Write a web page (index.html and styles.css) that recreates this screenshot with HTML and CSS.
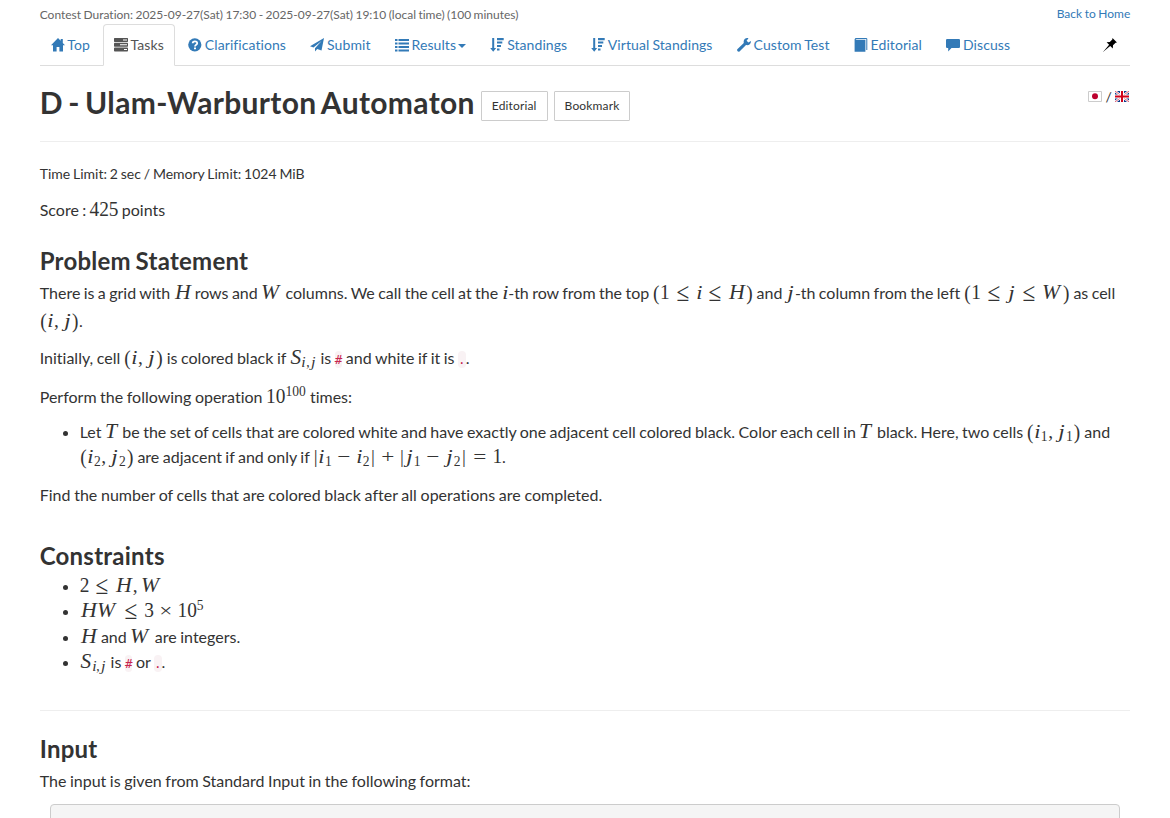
FILE: index.html
```html
<!DOCTYPE html>
<html lang="en">
<head>
<meta charset="utf-8">
<title>D - Ulam-Warburton Automaton</title>
<link rel="stylesheet" href="styles.css">
</head>
<body>
<main class="container">
  <div class="contest-bar"><span>Contest Duration: 2025-09-27(Sat) 17:30 - 2025-09-27(Sat) 19:10 (local time) (100 minutes)</span><a class="home" href="#">Back to Home</a></div>
  <nav class="tabs">
    <a class="tab" href="#"><svg class="icon" viewBox="0 0 14 14"><path d="M7 0L0 7.300h2V13.500h3.600V9h2.800v4.500H12V7.300h2L11.800 5V1H9.700v1.800z"/></svg> Top</a>
    <a class="tab active" href="#"><svg class="icon" viewBox="0 0 14 14"><path d="M.5 0h13l.5.6v2.800l-.5.6H.5L0 3.400V.6zM.5 4.800h13l.5.6v2.800l-.5.6H.5L0 8.200V5.400zM.5 9.600h13l.5.6v2.600l-.5.6H.5L0 12.800v-2.600z"/><path class="cut" d="M9 1.500h4v1H9zM6 6.300h7v1H6zM10 11h3v1h-3z"/></svg> Tasks</a>
    <a class="tab" href="#"><svg class="icon" viewBox="0 0 14 14"><circle cx="6.800" cy="6.800" r="6.600"/><path class="cut-line" d="M4.700 5.300C4.700 2.800 9.200 2.700 9.200 5.200 9.200 6.800 7 6.500 7 8.400"/><path class="cut" d="M6 9.400h2v1.900H6z"/></svg> Clarifications</a>
    <a class="tab" href="#"><svg class="icon" viewBox="0 0 14 14"><path d="M14 0L0 8.300l3.500 1.100L11.500 3 5 10.200V13.500L7.200 11l4.300 1.600z"/></svg> Submit</a>
    <a class="tab" href="#"><svg class="icon" viewBox="0 0 14 14"><path d="M0 1h2.500v2H0zM3.500 1H14v2H3.500zM0 4.500h2.500v2H0zM3.500 4.500H14v2H3.500zM0 8h2.500v2H0zM3.500 8H14v2H3.500zM0 11.500h2.500v2H0zM3.500 11.500H14v2H3.500z"/></svg> Results<i class="caret"></i></a>
    <a class="tab" href="#"><svg class="icon" viewBox="0 0 14 14"><path d="M2.200 0h2v10H6.200L3.200 13.800.2 10h2zM7 0h6.700v2.300H7zM7 3.600h5.300v2H7zM7 7h4v2H7zM7 10.500h2.500v2H7z"/></svg> Standings</a>
    <a class="tab" href="#"><svg class="icon" viewBox="0 0 14 14"><path d="M2.200 0h2v10H6.200L3.200 13.800.2 10h2zM7 0h6.700v2.300H7zM7 3.600h5.300v2H7zM7 7h4v2H7zM7 10.500h2.500v2H7z"/></svg> Virtual Standings</a>
    <a class="tab" href="#"><svg class="icon" viewBox="0 0 14 14"><path d="M11.500.2C8.500-.6 6 1.700 6.800 4.900L.3 11.300q-.6 1 .3 1.900.9.800 1.900.2L9 7c2.800.7 5.200-1.300 4.900-4L11.400 4.600 9.600 2.800z"/></svg> Custom Test</a>
    <a class="tab" href="#"><svg class="icon" viewBox="0 0 14 14"><path d="M1.500 0h11l.8.8V12h-1V1H2.500l-1 .8h9.900v12H.6V1.200z"/></svg> Editorial</a>
    <a class="tab" href="#"><svg class="icon" viewBox="0 0 14 14"><path d="M.8.9h12.400l.8.8v7.500l-.8.8H5.500L2.200 13.500V10H.8L0 9.200V1.700z"/></svg> Discuss</a>
    <a class="pin" href="#"><svg class="icon" viewBox="0 0 14 14"><path d="M9.500 0L14 4.400 12.600 4.700 10 7.300 9.800 10.500 7.200 7.900 0 14 6.100 6.800 3.600 4.300 6.800 4 9.300 1.500z"/></svg></a>
  </nav>

  <header class="title-row">
    <h1>D - Ulam-Warburton Automaton</h1>
    <a class="btn" href="#">Editorial</a>
    <a class="btn" href="#">Bookmark</a>
    <span class="lang"><svg class="flag" viewBox="0 0 14 11"><path fill="#fff" stroke="#ccc" d="M.5.5h13v10H.5z"/><circle cx="7" cy="5.300" r="3" fill="#bc002d"/></svg><span>/</span><svg class="flag" viewBox="0 0 14 11"><path fill="#0a3a8c" d="M0 0h14v11H0z"/><path stroke="#fff" stroke-width="2.400" d="M0 0l14 11M14 0L0 11"/><path stroke="#d8304a" stroke-width=".8" d="M0 0l14 11M14 0L0 11"/><path fill="#fff" d="M5 0h4v11H5zM0 3.500h14v4H0z"/><path fill="#d0021b" d="M6 0h2v11H6zM0 4.500h14v2H0z"/></svg></span>
  </header>

  <p class="limits">Time Limit: 2 sec / Memory Limit: 1024 MiB</p>

  <article class="statement">
    <p class="score">Score : <span class="m"><b class="d">4</b><b class="d">2</b><b class="d">5</b></span> points</p>

    <section class="problem">
      <h3>Problem Statement</h3>
      <p class="intro">There is a grid with <span class="m"><i class="H">H</i></span> rows and <span class="m"><i class="W">W</i></span> columns. We call the cell at the <span class="m"><i class="i">i</i></span>-th row from the top <span class="m"><b class="p">(</b><b class="d">1</b><b class="rel">≤</b><i class="i">i</i><b class="rel">≤</b><i class="H">H</i><b class="p">)</b></span> and <span class="m"><i class="j">j</i></span>-th column from the left <span class="m"><b class="p">(</b><b class="d">1</b><b class="rel">≤</b><i class="j">j</i><b class="rel">≤</b><i class="W">W</i><b class="p">)</b></span> as cell <span class="m"><b class="p">(</b><i class="i">i</i><b class="c">,</b><i class="j">j</i><b class="p">)</b></span>.</p>
      <p class="initial">Initially, cell <span class="m"><b class="p">(</b><i class="i">i</i><b class="c">,</b><i class="j">j</i><b class="p">)</b></span> is colored black if <span class="m"><i class="S">S</i><span class="sub"><i class="i">i</i><b class="sc">,</b><i class="j">j</i></span></span> is <code>#</code> and white if it is <code>.</code>.</p>
      <p class="perform">Perform the following operation <span class="m"><b class="d">1</b><b class="d">0</b><span class="sup"><b class="d">1</b><b class="d">0</b><b class="d">0</b></span></span> times:</p>
      <ul class="steps">
        <li>Let <span class="m"><i class="T">T</i></span> be the set of cells that are colored white and have exactly one adjacent cell colored black. Color each cell in <span class="m"><i class="T">T</i></span> black. Here, two cells <span class="m"><b class="p">(</b><i class="i">i</i><span class="sub"><b class="d">1</b></span><b class="c">,</b><i class="j">j</i><span class="sub"><b class="d">1</b></span><b class="p">)</b></span> and <span class="m"><b class="p">(</b><i class="i">i</i><span class="sub"><b class="d">2</b></span><b class="c">,</b><i class="j">j</i><span class="sub"><b class="d">2</b></span><b class="p">)</b></span> are adjacent if and only if <span class="m"><b class="v">|</b><i class="i">i</i><span class="sub"><b class="d">1</b></span><b class="op">−</b><i class="i">i</i><span class="sub"><b class="d">2</b></span><b class="v">|</b><b class="op">+</b><b class="v">|</b><i class="j">j</i><span class="sub"><b class="d">1</b></span><b class="op">−</b><i class="j">j</i><span class="sub"><b class="d">2</b></span><b class="v">|</b><b class="rel eq">=</b><b class="d">1</b></span>.</li>
      </ul>
      <p class="find">Find the number of cells that are colored black after all operations are completed.</p>
    </section>

    <section class="constraints">
      <h3>Constraints</h3>
      <ul>
        <li><span class="m"><b class="d">2</b><b class="rel">≤</b><i class="H">H</i><b class="c">,</b><i class="W">W</i></span></li>
        <li><span class="m"><i class="H">H</i><i class="W">W</i><b class="rel">≤</b><b class="d">3</b><b class="op">×</b><b class="d">1</b><b class="d">0</b><span class="sup"><b class="d">5</b></span></span></li>
        <li><span class="m"><i class="H">H</i></span> and <span class="m"><i class="W">W</i></span> are integers.</li>
        <li><span class="m"><i class="S">S</i><span class="sub"><i class="i">i</i><b class="sc">,</b><i class="j">j</i></span></span> is <code>#</code> or <code>.</code>.</li>
      </ul>
    </section>

    <section class="input">
      <h3>Input</h3>
      <p>The input is given from Standard Input in the following format:</p>
      <pre></pre>
    </section>
  </article>
</main>
</body>
</html>
```
FILE: styles.css
```css
* { box-sizing: border-box; }
html { overflow: hidden; }
body { margin: 0; height: 818px; overflow: hidden; background: #fff; color: #333; font: 14px/20px Lato, sans-serif; font-variant-ligatures: none; }
a { color: #337ab7; text-decoration: none; }
p, h1, h3, ul, pre { margin: 0; }

.container { width: 1090.6px; margin: 0 auto; }
.contest-bar { display: flex; justify-content: space-between; height: 24px; padding-top: 5px; font-size: 12px; color: #666; word-spacing: -.7px; }
.home { margin-top: -1px; word-spacing: -.5px; }

.tabs { display: flex; gap: 2px; height: 42px; border-bottom: 1px solid #ddd; }
.tab { height: 42px; padding: 10px; border: 1px solid transparent; border-radius: 4px 4px 0 0; white-space: nowrap; word-spacing: -.6px; letter-spacing: .075px; }
.tab.active { color: #555; background: #fff; border-color: #ddd #ddd #fff; }
.icon { display: inline-block; width: 14px; height: 14px; vertical-align: -2px; fill: currentColor; }
.cut { fill: #fff; }
.cut-line { fill: none; stroke: #fff; stroke-width: 1.8; }
.caret { display: inline-block; margin-left: 2px; vertical-align: middle; border: 4px solid transparent; border-top-color: currentColor; border-bottom: 0; }
.pin { margin-left: auto; padding: 11px 13px 0 0; color: #000; }

.title-row { display: flex; align-items: flex-start; height: 76px; padding-top: 18px; border-bottom: 1px solid #eee; }
h1 { margin-right: 6px; font-size: 30px; line-height: 36px; font-weight: 700; letter-spacing: .33px; word-spacing: -2.3px; white-space: nowrap; }
.btn { height: 30px; margin: 7px 6px 0 0; padding: 5px 10px; border: 1px solid #ccc; border-radius: 1px; font-size: 12px; line-height: 18px; letter-spacing: .15px; color: #333; }
.lang { display: flex; gap: 3.6px; margin-left: auto; padding: 7px 1px 0 0; line-height: 11px; }
.flag { width: 14px; height: 11px; }
.limits { margin-top: 22px; word-spacing: -.75px; }

.statement { font-size: 16px; line-height: 24px; word-spacing: -.55px; }
.score { margin-top: 14px; word-spacing: -.8px; }
h3 { font-size: 24px; line-height: 26px; font-weight: 700; letter-spacing: .24px; word-spacing: -1.4px; }
.problem { margin-top: 26px; }
.intro { margin-top: 5px; line-height: 28px; word-spacing: -.72px; }
.initial { margin-top: 11px; word-spacing: -.55px; }
.perform { margin-top: 15px; }
ul { padding-left: 40px; line-height: 25px; }
.steps { margin: 10px 0 14px; word-spacing: -.66px; }
.find { word-spacing: -.37px; }
.constraints { margin-top: 36px; padding-bottom: 36px; border-bottom: 1px solid #eee; }
.constraints ul { margin-top: 4px; }
.constraints li:nth-child(3) { margin-top: 1px; }
.input { margin-top: 25px; }
.input p { margin-top: 7px; }
pre { height: 40px; margin: 11px 10px 0; border: 1px solid #ccc; border-radius: 4px; background: #f5f5f5; }
code { padding: 1px 0; border-radius: 4px; background: #f9f2f4; color: #c7254e; font: 12.5px/16px "DejaVu Sans Mono", monospace; }

.m { display: inline-block; font: 1.21em/1 "Liberation Serif", serif; white-space: nowrap; }
.m b, .m i { display: inline-block; font-weight: 400; text-align: center; line-height: 1; }
.m .d { width: .5em; transform: scaleY(1.04); }
.m .p { width: .389em; transform: scaleY(1.1); }
.m .v { width: .278em; }
.m .c { width: .4447em; text-align: left; }
.m .sc { width: .278em; text-align: left; }
.m .rel { width: 1.3336em; transform: scale(1.2, 1.35); }
.m .eq { transform: scaleX(1.2); }
.m .op { width: 1.2224em; transform: scaleX(1.2); }
.m .H, .m .W, .m .T, .m .S { text-align: left; transform-origin: left; }
.m .H { width: .9125em; transform: scale(1.13, 1.05); padding-left: .05em; }
.m .W { width: 1.0833em; transform: scale(1.12, 1.05); }
.m .T { width: .7233em; transform: scale(1.12, 1.05); }
.m .S { width: .6138em; transform: scale(1.1, 1.05); padding-left: .02em; }
.m .i { width: .3447em; transform: scaleX(1.15); }
.m .j { width: .469em; transform: scaleX(1.2); }
.sub, .sup { display: inline-block; font-size: .7em; padding-right: .05em; }
.sub { transform: translateY(.2em); }
.sup { transform: translateY(-.52em); }
```
